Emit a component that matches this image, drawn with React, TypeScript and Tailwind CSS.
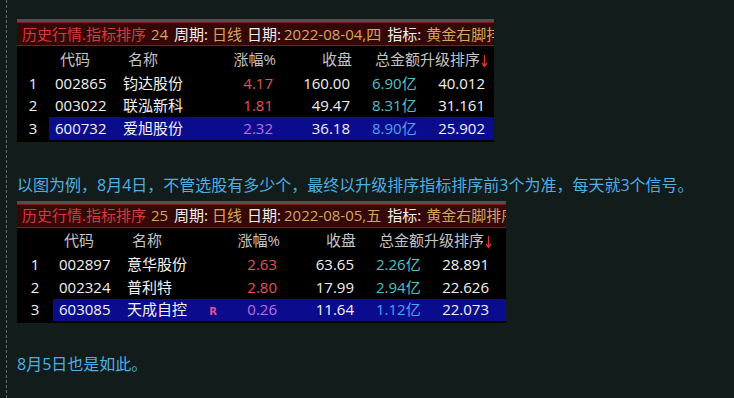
const font = "font-['Open_Sans','Noto_Sans_CJK_SC',sans-serif]"

type Row = {
  no: number
  code: string
  name: string
  chg: string
  close: string
  amt: string
  rank: string
  flag?: string
}

function DownArrow() {
  return (
    <svg width="7" height="14" viewBox="0 0 7 14" className="ml-[1px] mt-[3px]">
      <path d="M3.5 1v11M1 9l2.5 3.5L6 9" stroke="#e03434" strokeWidth="1.3" fill="none" />
    </svg>
  )
}

function RankTable({ n, date, rows, shift, width }: {
  n: number
  date: string
  rows: Row[]
  shift: number
  width: number
}) {
  const numW = shift === 0 ? "w-[32px]" : "w-[36px]"
  return (
    <div className={`${font} text-[15px] leading-none overflow-hidden`} style={{ width }}>
      {/* top strip */}
      <div className="h-[3px] bg-[#4c5154]" />
      {/* title bar */}
      <div className="h-[24px] flex items-center bg-[#360707] border-y border-[#8c1616] pl-[5px] whitespace-nowrap overflow-hidden">
        <span className="text-[#d33c3c]">历史行情.指标排序</span>
        <span className="text-[#d2a85c] ml-[5px]">{n}</span>
        <span className="text-[#f0f0f0] ml-[6px]">周期:</span>
        <span className="text-[#d2a85c] ml-[4px]">日线</span>
        <span className="text-[#f0f0f0] ml-[5px]">日期:</span>
        <span className="text-[#d2a85c] ml-[3px]">{date}</span>
        <span className="text-[#f0f0f0] ml-[6px]">指标:</span>
        <span className="text-[#d2a85c] ml-[5px]">黄金右脚排序</span>
      </div>
      <div className="bg-black pb-[2px]">
        {/* column headers */}
        <div className="h-[26px] flex items-center text-[#c4c4c4] whitespace-nowrap">
          <div className={numW} />
          <div className="w-[74px] pl-[11px]">代码</div>
          <div className="w-[100px] pl-[5px]">名称</div>
          <div className="w-[53px] text-right">涨幅%</div>
          <div className="w-[76px] text-right">收盘</div>
          <div className="flex items-center pl-[23px]">
            总金额升级排序
            <DownArrow />
          </div>
        </div>
        {rows.map((r, i) => {
          const hi = i === rows.length - 1
          return (
            <div key={r.code} className="h-[22.5px] flex items-center text-[#f2f2f2] whitespace-nowrap">
              <div className={`${numW} text-center`}>{r.no}</div>
              <div className={`flex-1 flex items-center h-full ${hi ? "bg-[#0b0b8e]" : ""}`}>
                <div className="w-[74px] pl-[6px]">{r.code}</div>
                <div className="w-[100px] flex items-center">
                  {r.name}
                  {r.flag && (
                    <span className="ml-auto mr-[10px] mt-[5px] text-[10px] font-bold text-[#e4508c] font-['DejaVu_Sans',sans-serif]">{r.flag}</span>
                  )}
                </div>
                <div className={`w-[53px] text-right pr-[3px] ${hi ? "text-[#c26ce0]" : "text-[#e05454]"}`}>{r.chg}</div>
                <div className="w-[76px] text-right pr-[2px]">{r.close}</div>
                <div className={`w-[65px] pl-[20px] ${hi ? "text-[#4ea2f0]" : "text-[#4fc0c8]"}`}>{r.amt}</div>
                <div className="w-[68px] text-right">{r.rank}</div>
              </div>
            </div>
          )
        })}
      </div>
    </div>
  )
}

const day1: Row[] = [
  { no: 1, code: "002865", name: "钧达股份", chg: "4.17", close: "160.00", amt: "6.90亿", rank: "40.012" },
  { no: 2, code: "003022", name: "联泓新科", chg: "1.81", close: "49.47", amt: "8.31亿", rank: "31.161" },
  { no: 3, code: "600732", name: "爱旭股份", chg: "2.32", close: "36.18", amt: "8.90亿", rank: "25.902" },
]

const day2: Row[] = [
  { no: 1, code: "002897", name: "意华股份", chg: "2.63", close: "63.65", amt: "2.26亿", rank: "28.891" },
  { no: 2, code: "002324", name: "普利特", chg: "2.80", close: "17.99", amt: "2.94亿", rank: "22.626" },
  { no: 3, code: "603085", name: "天成自控", chg: "0.26", close: "11.64", amt: "1.12亿", rank: "22.073", flag: "R" },
]

export default function App() {
  return (
    <div className="w-[734px] h-[398px] bg-[#121c1a] overflow-hidden">
      <div className="ml-[6px] h-full border-l border-dashed border-[#5f6f62] pl-[10px] pt-[19px]">
        <RankTable n={24} date="2022-08-04,四" rows={day1} shift={0} width={477} />
        <p className={`${font} mt-[31px] text-[16px] leading-[24px] text-[#4cb0e6] whitespace-nowrap`}>
          以图为例，8月4日，不管选股有多少个，最终以升级排序指标排序前3个为准，每天就3个信号。
        </p>
        <div className="mt-[4px]">
          <RankTable n={25} date="2022-08-05,五" rows={day2} shift={3} width={489} />
        </div>
        <p className={`${font} mt-[29px] text-[16px] leading-[24px] text-[#4cb0e6]`}>8月5日也是如此。</p>
      </div>
    </div>
  )
}
